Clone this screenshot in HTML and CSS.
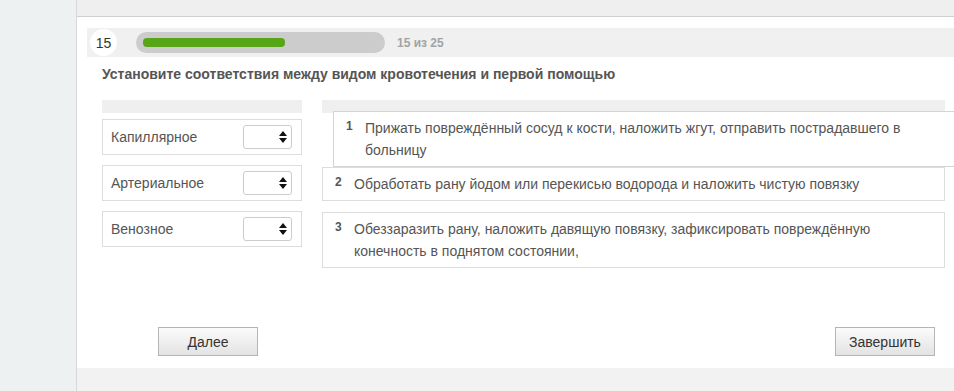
FILE: index.html
```html
<!DOCTYPE html>
<html lang="ru">
<head>
  <meta charset="UTF-8">
  <meta name="viewport" content="width=device-width, initial-scale=1.0">
  <title>Тест</title>
  <link rel="stylesheet" href="styles.css">
</head>
<body>

  <div class="sidebar"></div>

  <div class="main">
    <div class="topbar"></div>

    <div class="content">
      <div class="progress-row">
        <div class="num-circle">15</div>
        <div class="track">
          <div class="fill" style="width: 142px"></div>
        </div>
        <div class="progress-text">15 из 25</div>
      </div>

      <div class="question">Установите соответствия между видом кровотечения и первой помощью</div>

      <div class="match">
        <div class="left-col">
          <div class="col-head"></div>
          <div class="option">
            <span>Капиллярное</span>
            <div class="select-box"><svg width="8" height="12" viewBox="0 0 8 12"><path d="M4 0L8 5H0Z M4 12L8 7H0Z" fill="#111"/></svg></div>
          </div>
          <div class="option">
            <span>Артериальное</span>
            <div class="select-box"><svg width="8" height="12" viewBox="0 0 8 12"><path d="M4 0L8 5H0Z M4 12L8 7H0Z" fill="#111"/></svg></div>
          </div>
          <div class="option">
            <span>Венозное</span>
            <div class="select-box"><svg width="8" height="12" viewBox="0 0 8 12"><path d="M4 0L8 5H0Z M4 12L8 7H0Z" fill="#111"/></svg></div>
          </div>
        </div>

        <div class="right-col">
          <div class="col-head"></div>
          <div class="answer dragged">
            <span class="answer-num">1</span>
            <span>Прижать повреждённый сосуд к кости, наложить жгут, отправить пострадавшего в больницу</span>
          </div>
          <div class="answer">
            <span class="answer-num">2</span>
            <span>Обработать рану йодом или перекисью водорода и наложить чистую повязку</span>
          </div>
          <div class="answer spaced">
            <span class="answer-num">3</span>
            <span>Обеззаразить рану, наложить давящую повязку, зафиксировать повреждённую конечность в поднятом состоянии,</span>
          </div>
        </div>
      </div>

      <div class="buttons">
        <button class="btn">Далее</button>
        <button class="btn">Завершить</button>
      </div>
    </div>

    <div class="bottombar"></div>
  </div>

</body>
</html>
```

FILE: styles.css
```css
body {
  font-family: "Liberation Sans", Arial, sans-serif;
  margin: 0;
  padding: 0;
  width: 954px;
  height: 391px;
  overflow: hidden;
  display: flex;
  background-color: #ffffff;
}

.sidebar {
  width: 76px;
  background-color: #eef1f2;
  border-right: 1px solid #d6d8d9;
}

.main {
  flex: 1;
  display: flex;
  flex-direction: column;
  min-width: 0;
  overflow: hidden;
}

.topbar {
  height: 16px;
  background-color: #efefef;
  border-bottom: 1px solid #cfcfcf;
}

.content {
  height: 351px;
  box-sizing: border-box;
  padding-top: 11px;
  background-color: #ffffff;
}

.bottombar {
  flex: 1;
  background-color: #f2f2f2;
}

.progress-row {
  margin-left: 10px;
  height: 29px;
  background-color: #f0f0f0;
  display: flex;
  align-items: center;
}

.num-circle {
  width: 27px;
  height: 27px;
  margin-left: 3px;
  border-radius: 50%;
  background-color: #ffffff;
  color: #333;
  font-size: 14px;
  display: flex;
  align-items: center;
  justify-content: center;
}

.track {
  width: 235px;
  height: 21px;
  margin-left: 19px;
  padding: 0 7px;
  border-radius: 11px;
  background-color: #cccccc;
  display: flex;
  align-items: center;
}

.fill {
  height: 9px;
  border-radius: 4px;
  background-color: #57a618;
}

.progress-text {
  margin-left: 12px;
  font-size: 12px;
  font-weight: bold;
  color: #a3a3a3;
}

.question {
  margin: 9px 0 0 25px;
  font-size: 14px;
  line-height: 17px;
  font-weight: bold;
  color: #555555;
}

.match {
  display: flex;
  gap: 20px;
  margin: 17px 0 0 25px;
}

.left-col {
  width: 200px;
  display: flex;
  flex-direction: column;
  gap: 10px;
}

.left-col .col-head {
  margin-bottom: -4px;
}

.col-head {
  height: 13px;
  background-color: #efefef;
}

.option {
  height: 36px;
  box-sizing: border-box;
  border: 1px solid #dddddd;
  padding: 0 9px 0 8px;
  display: flex;
  align-items: center;
  justify-content: space-between;
  font-size: 14px;
  color: #555555;
}

.select-box {
  width: 49px;
  height: 24px;
  box-sizing: border-box;
  border: 1px solid #cccccc;
  border-radius: 3px;
  background-color: #ffffff;
  display: flex;
  align-items: center;
  justify-content: flex-end;
  padding-right: 4px;
}

.right-col {
  width: 623px;
  display: flex;
  flex-direction: column;
}

.answer {
  box-sizing: border-box;
  border: 1px solid #dddddd;
  background-color: #ffffff;
  padding: 5px 12px 5px 12px;
  display: flex;
  font-size: 14px;
  line-height: 22px;
  color: #555555;
}

.answer-num {
  flex: none;
  width: 8px;
  margin-right: 11px;
  font-size: 12px;
  font-weight: bold;
  line-height: 18px;
}

.answer.dragged {
  position: relative;
  left: 11px;
  margin-top: -2px;
  margin-right: -30px;
  padding-right: 70px;
  border-color: #d4d4d4;
}

.answer.spaced {
  margin-top: 11px;
}

.buttons {
  display: flex;
  justify-content: space-between;
  margin: 59px 19px 0 81px;
}

.btn {
  width: 100px;
  height: 29px;
  font-family: "Liberation Sans", Arial, sans-serif;
  font-size: 14px;
  color: #333333;
  border: 1px solid #b5b5b5;
  border-radius: 0;
  background: linear-gradient(#fbfbfb, #e3e3e3);
  cursor: pointer;
}
```
